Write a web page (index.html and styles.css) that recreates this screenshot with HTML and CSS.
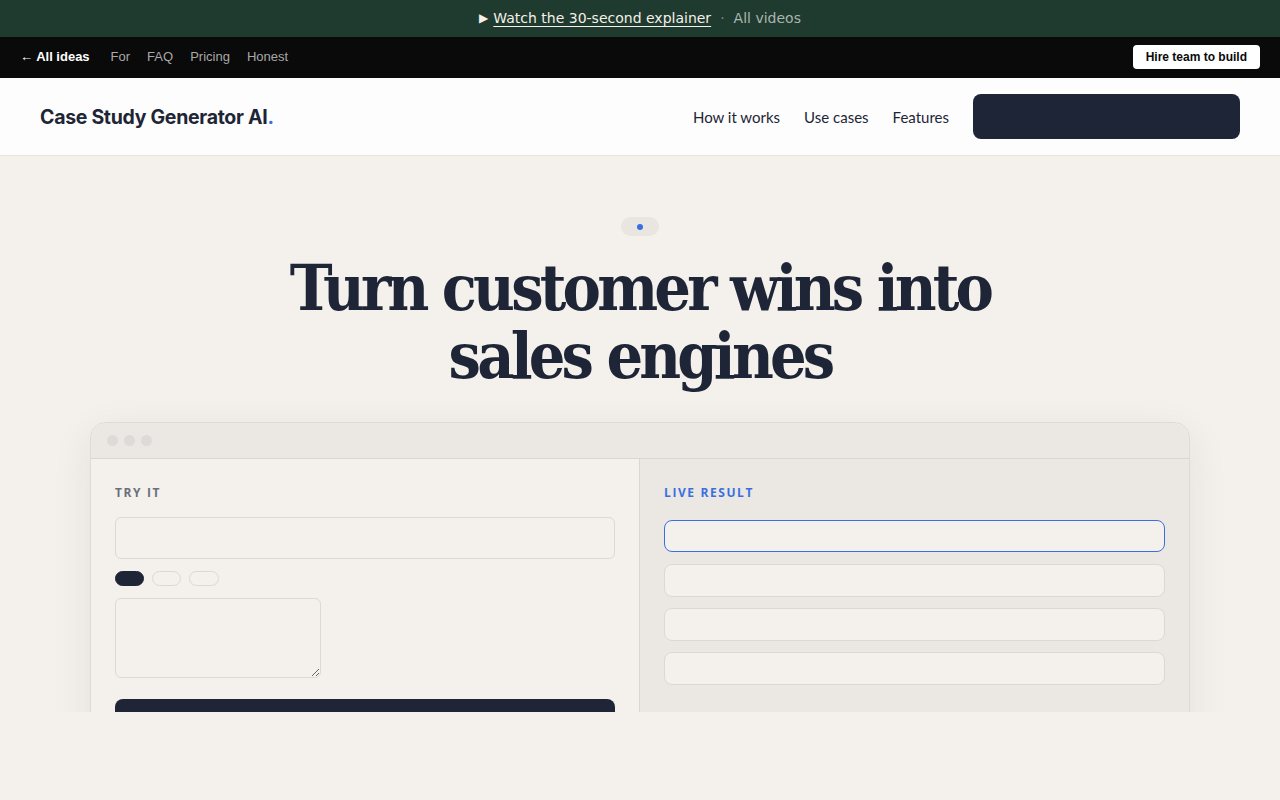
FILE: index.html
```html
<!DOCTYPE html>
<html lang="en">
<head>
<meta charset="utf-8">
<title>Case Study Generator AI</title>
<link rel="stylesheet" href="styles.css">
</head>
<body>
<div class="promo">
  <span class="play">▶</span>
  <a class="promo-link" href="#">Watch the 30-second explainer</a>
  <span class="sep">·</span>
  <a class="promo-all" href="#">All videos</a>
</div>
<nav class="topnav">
  <div class="topnav-left">
    <a class="back" href="#">← All ideas</a>
    <a href="#">For</a>
    <a href="#">FAQ</a>
    <a href="#">Pricing</a>
    <a href="#">Honest</a>
  </div>
  <a class="hire" href="#">Hire team to build</a>
</nav>
<header class="site-header">
  <div class="logo">Case Study Generator AI<span class="dot">.</span></div>
  <nav class="main-nav">
    <a href="#">How it works</a>
    <a href="#">Use cases</a>
    <a href="#">Features</a>
    <a class="cta" href="#"></a>
  </nav>
</header>
<section class="hero">
  <div class="badge"><span class="badge-dot"></span></div>
  <h1>Turn customer wins into<br>sales engines</h1>
  <div class="window">
    <div class="window-bar">
      <span class="wdot"></span><span class="wdot"></span><span class="wdot"></span>
    </div>
    <div class="window-body">
      <div class="pane pane-left">
        <div class="label">TRY IT</div>
        <div class="input"></div>
        <div class="chips">
          <span class="chip active"></span><span class="chip"></span><span class="chip"></span>
        </div>
        <textarea class="textarea"></textarea>
        <div class="submit"></div>
      </div>
      <div class="pane pane-right">
        <div class="label blue">LIVE RESULT</div>
        <div class="result focus"></div>
        <div class="result"></div>
        <div class="result"></div>
        <div class="result"></div>
      </div>
    </div>
  </div>
</section>
</body>
</html>
```
FILE: styles.css
```css
* { box-sizing: border-box; }
html, body { margin: 0; padding: 0; }
body {
  background: #f4f1ec;
  font-family: "Liberation Sans", Arial, sans-serif;
  color: #1e2536;
}
a { text-decoration: none; color: inherit; }

.promo {
  height: 37px;
  background: #1f3a2e;
  display: flex;
  align-items: center;
  justify-content: center;
  gap: 5px;
  font-family: "DejaVu Sans", sans-serif;
  font-size: 14px;
  color: #a9b5ae;
  padding-bottom: 2px;
}
.promo .play { color: #f4f1e8; font-size: 12px; }
.promo-link {
  color: #f4f1e8;
  text-decoration: underline;
  text-underline-offset: 3px;
}
.promo .sep { margin: 0 4px; color: #7e8f86; }

.topnav {
  height: 41px;
  background: #0a0a0a;
  display: flex;
  align-items: center;
  justify-content: space-between;
  padding: 0 20px 2px 20px;
  font-size: 13px;
}
.topnav-left { display: flex; gap: 17px; align-items: center; }
.topnav-left a { color: #a8a8a8; }
.topnav-left a.back { color: #fff; font-weight: bold; margin-right: 4px; }
.hire {
  background: #fff;
  color: #0a0a0a;
  font-weight: bold;
  font-size: 12px;
  padding: 0 13px;
  height: 24px;
  line-height: 24px;
  border-radius: 4px;
}

.site-header {
  height: 78px;
  background: #fdfdfd;
  border-bottom: 1px solid #e9e5df;
  display: flex;
  align-items: center;
  justify-content: space-between;
  padding: 0 40px;
  font-family: Lato, "Liberation Sans", sans-serif;
}
.logo {
  font-family: Inter, sans-serif;
  font-size: 19.5px;
  font-weight: 700;
  letter-spacing: -0.3px;
  color: #1e2536;
}
.logo .dot { color: #3b6fe0; }
.main-nav { display: flex; align-items: center; gap: 24px; font-size: 15px; }
.main-nav a { color: #1e2536; }
.main-nav .cta {
  width: 267px;
  height: 45px;
  background: #1e2536;
  border-radius: 8px;
}

.hero {
  height: 556px;
  overflow: hidden;
  display: flex;
  flex-direction: column;
  align-items: center;
  padding-top: 61px;
}
.hero > * { flex-shrink: 0; }
.badge {
  width: 38px;
  height: 19px;
  border-radius: 10px;
  background: #e9e6e1;
  display: flex;
  align-items: center;
  justify-content: center;
}
.badge-dot { width: 6px; height: 6px; border-radius: 50%; background: #3b6fe0; }
h1 {
  margin: 18px 0 0;
  font-family: "DejaVu Serif Condensed", "DejaVu Serif", serif;
  font-stretch: condensed;
  font-weight: bold;
  font-size: 64px;
  line-height: 68px;
  letter-spacing: -3.8px;
  text-align: center;
  color: #1e2536;
}
.window {
  margin-top: 32px;
  width: 1100px;
  border: 1px solid #dedad4;
  border-radius: 16px 16px 0 0;
  box-shadow: 0 10px 40px rgba(40, 30, 20, 0.08);
  background: #f4f1ec;
}
.window-bar {
  height: 36px;
  background: #ebe8e3;
  border-bottom: 1px solid #dad6d0;
  border-radius: 16px 16px 0 0;
  display: flex;
  align-items: center;
  gap: 6px;
  padding-left: 16px;
}
.wdot { width: 11px; height: 11px; border-radius: 50%; background: #dddbd7; }
.window-body { display: grid; grid-template-columns: 549px 1fr; height: 400px; }
.pane { padding: 28px 24px; display: flex; flex-direction: column; }
.pane > * { flex-shrink: 0; }
.pane-left { border-right: 1px solid #dad6d0; }
.pane-right { background: #ebe8e3; }
.label {
  font-family: "Open Sans", sans-serif;
  font-weight: bold;
  font-size: 12px;
  letter-spacing: 1.6px;
  color: #6b6f7a;
  line-height: 12px;
  margin-bottom: 18px;
}
.label.blue { color: #3b6fe0; margin-bottom: 21px; }
.input {
  height: 42px;
  border: 1px solid #dcd8d2;
  border-radius: 6px;
  background: #f4f1ec;
}
.chips { display: flex; gap: 8px; margin-top: 12px; }
.chip { width: 29px; height: 15px; border-radius: 8px; border: 1px solid #dcd8d2; }
.chip:nth-child(3) { width: 30px; }
.chip.active { background: #1e2536; border-color: #1e2536; }
.textarea {
  margin-top: 12px;
  width: 206px;
  height: 80px;
  border: 1px solid #dcd8d2;
  border-radius: 6px;
  background: #f4f1ec;
  font: inherit;
}
.submit { margin-top: 21px; height: 44px; background: #1e2536; border-radius: 8px; }
.result {
  height: 33px;
  border: 1px solid #dcd8d2;
  border-radius: 8px;
  background: #f4f1ec;
  margin-bottom: 11px;
}
.result.focus { border-color: #3b6fe0; height: 32px; margin-bottom: 12px; }
```
